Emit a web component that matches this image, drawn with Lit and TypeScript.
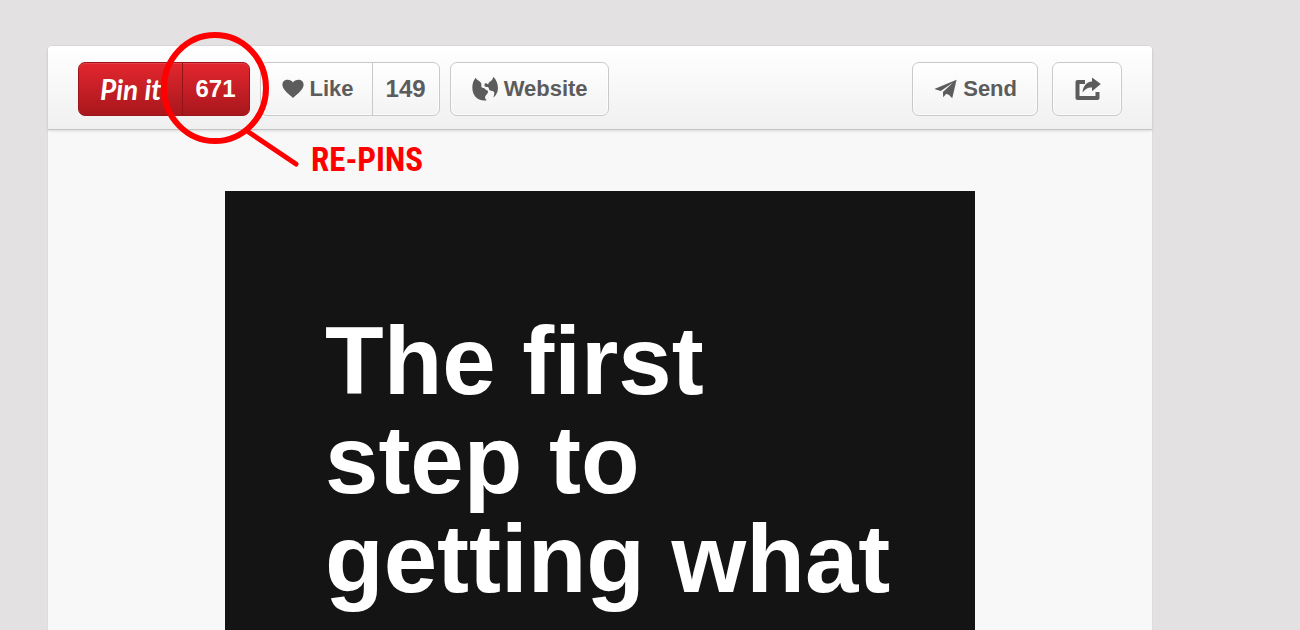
import { LitElement, html, css, svg } from "lit";
import { customElement } from "lit/decorators.js";

const heart = svg`<svg class="icon" width="22" height="20" viewBox="0 0 22 20" aria-hidden="true">
  <path fill="currentColor" d="M11 19 C9 16.500 0.600 11.500 0.400 6 C0.300 2.600 2.800 0.800 5.500 0.800 C8 0.800 10 2 11 3.400 C12 2 14 0.800 16.500 0.800 C19.200 0.800 21.700 2.600 21.600 6 C21.400 11.500 13 16.500 11 19Z"/>
</svg>`;

const globe = svg`<svg class="icon" width="26" height="26" viewBox="0 0 26 26" aria-hidden="true">
  <path fill="currentColor" d="M3.600 1.800 C4.400 3.600 6 4.200 7.400 5.200 C8.800 6 9.600 7.600 9.400 9.200 C9 10.800 9.800 12 11.400 12 C12.800 12 13 13.600 14.400 14 C16 14.400 16.400 15.800 15.600 17.200 C14.600 18.600 13.200 19.600 13 21.400 C13 22.600 14.200 23.400 14.400 24.400 C10 25 5.800 23.600 3.200 20.400 C-0.600 15.800 -0.800 7 3.600 1.800Z"/>
  <path fill="currentColor" d="M21.400 0.800 C26 5.400 27.200 13 24.600 17.600 C23.800 19.600 22.600 20.800 21.200 21.600 C21.600 19.800 22.800 18 22 16 C21.200 14.400 19.400 15.200 17.800 14.200 C16.600 13.200 17.200 12 16.200 11.200 C15.200 10.600 14 11.400 13 10.600 C12.200 9.800 12.200 8.200 13 7.400 C14 6.800 15.200 7.400 16 8.600 C16.500 7.400 16.600 6.800 17.800 5.800 C19.200 4.800 21 3.600 21.400 0.800Z"/>
</svg>`;

const plane = svg`<svg class="icon" width="23" height="20" viewBox="0 0 24 20" aria-hidden="true">
  <path fill="currentColor" d="M23.600 0.400 L0.300 10.100 L7 12 L20 3.200 L9.300 13.200 L9.600 18.600 L12.800 15 L15 16 Z"/>
  <path fill="currentColor" d="M23.600 0.400 L14.200 14.600 L19 19.600 Z"/>
</svg>`;

const share = svg`<svg class="icon" width="26" height="24" viewBox="0 0 26 24" aria-hidden="true">
  <path fill="none" stroke="currentColor" stroke-width="4" stroke-linejoin="round" d="M10 5 H2.500 V21 H22.500 V15"/>
  <path fill="currentColor" d="M17 0.500 L25.800 7 L17 14.200 V10.600 C13 10.200 10.600 12 7.600 15.400 C7.800 9.400 11.400 4.800 17 4.400 Z"/>
</svg>`;

@customElement("app-root")
export class AppRoot extends LitElement {
  static styles = css`
    :host {
      display: block;
      box-sizing: border-box;
      height: 100vh;
      overflow: hidden;
      padding: 46px 148px 0 48px;
      background: #e3e1e2;
      font-family: "Liberation Sans", Arial, sans-serif;
    }
    .card {
      min-height: 100%;
      border-radius: 4px 4px 0 0;
      background: #f8f8f8;
      box-shadow: 0 0 1px #bbb;
    }
    .toolbar {
      display: flex;
      align-items: center;
      gap: 10px;
      padding: 16px 30px 13px;
      border-bottom: 1px solid #c4c4c4;
      border-radius: 4px 4px 0 0;
      background: linear-gradient(#fff, #f0f0f0);
      box-shadow: 0 1px 3px rgba(0, 0, 0, 0.12);
    }
    .spacer {
      flex: 1;
    }
    .tail {
      display: flex;
      gap: 14px;
    }
    .button {
      display: flex;
      align-items: center;
      justify-content: center;
      box-sizing: border-box;
      height: 54px;
      min-width: 70px;
      margin: 0;
      padding: 0 20px 0 21px;
      gap: 6px;
      border: 1px solid #c9c9c9;
      border-radius: 7px;
      background: linear-gradient(#fff, #f3f3f3);
      box-shadow: inset 0 0 0 1px rgba(255, 255, 255, 0.7);
      color: #5c5c5c;
      font: bold 22px/26px "Liberation Sans", Arial, sans-serif;
      text-decoration: none;
      white-space: nowrap;
      cursor: pointer;
    }
    .icon {
      display: block;
      flex: none;
    }
    .split {
      position: relative;
      padding: 0;
      gap: 0;
      align-items: stretch;
    }
    .part,
    .count {
      display: flex;
      align-items: center;
      gap: 6px;
    }
    .part {
      padding: 0 18px 0 21px;
    }
    .count {
      padding: 0 13px;
      border-left: 1px solid #c9c9c9;
      font-size: 24px;
    }
    .pin {
      border-color: #9c151b;
      background: linear-gradient(#e3262e, #a8171d);
      box-shadow: inset 0 1px 0 rgba(255, 255, 255, 0.12);
      color: #fff;
    }
    .pin .count {
      border-color: #94141a;
    }
    .script {
      padding: 0 20px 0 21px;
      font: italic bold 28px/32px Lato, sans-serif;
    }
    .pinned {
      position: relative;
    }
    .callout {
      position: absolute;
      z-index: 1;
      left: 80px;
      top: -34px;
      pointer-events: none;
    }
    .note {
      position: absolute;
      z-index: 1;
      left: 233px;
      top: 76px;
      color: #f00;
      font: bold 33px/44px "Roboto Condensed", Roboto, sans-serif;
      white-space: nowrap;
    }
    .picture {
      box-sizing: border-box;
      max-width: 750px;
      min-height: 560px;
      margin: 61px auto 0;
      padding: 120px 80px 0 100px;
      background: #141414;
    }
    .quote {
      margin: 0;
      color: #fff;
      font-weight: bold;
      font-size: 96px;
      line-height: 99px;
    }
  `;

  render() {
    return html`
      <main class="card">
        <div class="toolbar">
          <div class="pinned">
            <button class="button split pin" type="button">
              <span class="part script">Pin it</span>
              <span class="count">671</span>
            </button>
            <svg class="callout" width="144" height="144" viewBox="0 0 144 144" aria-hidden="true">
              <ellipse cx="57" cy="60" rx="51" ry="53" fill="none" stroke="#f00" stroke-width="6"/>
              <path d="M89 103 L138 136" stroke="#f00" stroke-width="5" stroke-linecap="round"/>
            </svg>
            <span class="note">RE-PINS</span>
          </div>
          <button class="button split" type="button">
            <span class="part">${heart}Like</span>
            <span class="count">149</span>
          </button>
          <a class="button" href="#website">${globe}Website</a>
          <span class="spacer"></span>
          <div class="tail">
            <button class="button" type="button">${plane}Send</button>
            <button class="button" type="button" aria-label="Share">${share}</button>
          </div>
        </div>
        <article class="picture">
          <p class="quote">The first<br />step to<br />getting what</p>
        </article>
      </main>
    `;
  }
}
